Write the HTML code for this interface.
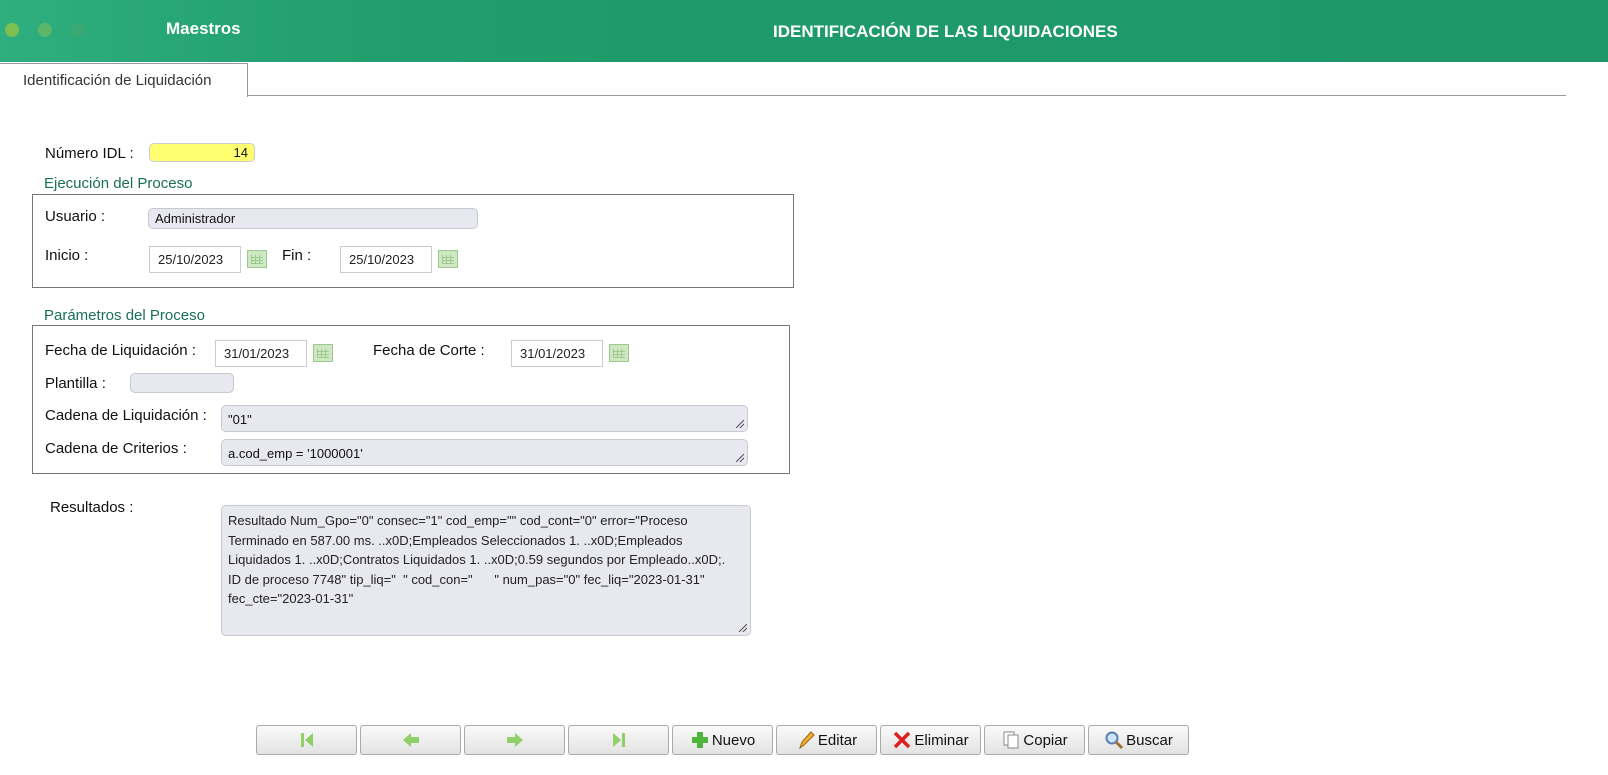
<!DOCTYPE html>
<html><head><meta charset="utf-8"><style>
*{box-sizing:border-box;margin:0;padding:0}
body{width:1608px;height:775px;position:relative;background:#fff;font-family:"Liberation Sans",sans-serif;color:#111;overflow:hidden}
.a{position:absolute}
.hdr{left:0;top:0;width:1608px;height:62px;background:linear-gradient(90deg,#2fae7e 0%,#22a06f 20%,#1f9a6a 40%,#1e9868 100%)}
.dot{width:14px;height:14px;border-radius:50%;top:23px}
.lbl{font-size:15px;color:#111}
.grp{font-size:15px;color:#1a6f57}
.box{border:1px solid #777}
.in{background:#e8e8f0;border:1px solid #c8c8d0;border-radius:5px;font-size:13px;padding:0 6px;line-height:20px}
.dt{background:#fff;border:1px solid #ccc;font-size:13px;width:92px;height:27px;line-height:25px;padding-left:8px;color:#222}
.cal{width:20px;height:18px;background:#cfe8c4;border:1px solid #9cc98c}
.cal:after{content:"";position:absolute;left:3px;top:4px;width:12px;height:9px;background:repeating-linear-gradient(90deg,#9cc98c 0 1px,transparent 1px 4px),repeating-linear-gradient(0deg,#9cc98c 0 1px,transparent 1px 3px)}
.btn{top:725px;height:30px;width:101px;border:1px solid #aaa;border-radius:3px;background:linear-gradient(#fafafa,#e2e2e2);font-size:15px;display:flex;align-items:center;justify-content:center;gap:2px;color:#111}
.rz{position:absolute;right:3px;bottom:3px;width:8px;height:8px;background:linear-gradient(135deg,transparent 45%,#555 45% 55%,transparent 55% 70%,#555 70% 80%,transparent 80%)}
</style></head><body>
<div class="a hdr"></div>
<div class="a dot" style="left:5px;background:#7dc050"></div>
<div class="a dot" style="left:38px;background:#5cb56a"></div>
<div class="a dot" style="left:71px;background:#3aa874"></div>
<div class="a" style="left:166px;top:19px;font-size:17px;font-weight:bold;color:#fff">Maestros</div>
<div class="a" style="left:773px;top:22px;font-size:17px;font-weight:bold;color:#fff">IDENTIFICACIÓN DE LAS LIQUIDACIONES</div>
<div class="a" style="left:0;top:95px;width:1566px;height:1px;background:#999"></div>
<div class="a" style="left:0;top:63px;width:248px;height:34px;background:#fff;border:1px solid #999;border-bottom:none;border-left:none"></div>
<div class="a" style="left:23px;top:72px;font-size:15px;color:#333">Identificación de Liquidación</div>

<div class="a lbl" style="left:45px;top:145px">Número IDL :</div>
<div class="a" style="left:149px;top:143px;width:106px;height:19px;background:#ffff70;border:1px solid #ccc;border-radius:5px;font-size:13px;text-align:right;padding-right:6px;line-height:18px">14</div>

<div class="a grp" style="left:44px;top:175px">Ejecución del Proceso</div>
<div class="a box" style="left:32px;top:194px;width:762px;height:94px"></div>
<div class="a lbl" style="left:45px;top:208px">Usuario :</div>
<div class="a in" style="left:148px;top:208px;width:330px;height:21px">Administrador</div>
<div class="a lbl" style="left:45px;top:247px">Inicio :</div>
<div class="a dt" style="left:149px;top:246px">25/10/2023</div>
<div class="a cal" style="left:247px;top:250px"></div>
<div class="a lbl" style="left:282px;top:247px">Fin :</div>
<div class="a dt" style="left:340px;top:246px">25/10/2023</div>
<div class="a cal" style="left:438px;top:250px"></div>

<div class="a grp" style="left:44px;top:307px">Parámetros del Proceso</div>
<div class="a box" style="left:32px;top:325px;width:758px;height:149px"></div>
<div class="a lbl" style="left:45px;top:342px">Fecha de Liquidación :</div>
<div class="a dt" style="left:215px;top:340px">31/01/2023</div>
<div class="a cal" style="left:313px;top:344px"></div>
<div class="a lbl" style="left:373px;top:342px">Fecha de Corte :</div>
<div class="a dt" style="left:511px;top:340px">31/01/2023</div>
<div class="a cal" style="left:609px;top:344px"></div>
<div class="a lbl" style="left:45px;top:375px">Plantilla :</div>
<div class="a in" style="left:130px;top:373px;width:104px;height:20px"></div>
<div class="a lbl" style="left:45px;top:407px">Cadena de Liquidación :</div>
<div class="a in" style="left:221px;top:405px;width:527px;height:27px;line-height:27px">"01"<span class="rz"></span></div>
<div class="a lbl" style="left:45px;top:440px">Cadena de Criterios :</div>
<div class="a in" style="left:221px;top:439px;width:527px;height:27px;line-height:27px">a.cod_emp = '1000001'<span class="rz"></span></div>

<div class="a lbl" style="left:50px;top:499px">Resultados :</div>
<div class="a in" style="left:221px;top:505px;width:530px;height:131px;padding:5px 6px;line-height:19.5px;color:#222;white-space:nowrap;overflow:hidden">Resultado Num_Gpo="0" consec="1" cod_emp="" cod_cont="0" error="Proceso<br>Terminado en 587.00 ms. ..x0D;Empleados Seleccionados 1. ..x0D;Empleados<br>Liquidados 1. ..x0D;Contratos Liquidados 1. ..x0D;0.59 segundos por Empleado..x0D;.<br>ID de proceso 7748" tip_liq="&nbsp; " cod_con="&nbsp;&nbsp;&nbsp;&nbsp;&nbsp; " num_pas="0" fec_liq="2023-01-31"<br>fec_cte="2023-01-31"<span class="rz"></span></div>

<div class="a btn" style="left:256px"><svg width="20" height="20"><rect x="4" y="3" width="3" height="14" fill="#8fd06a"/><path d="M16 3 L8 10 L16 17Z" fill="#8fd06a"/></svg></div>
<div class="a btn" style="left:360px"><svg width="22" height="20"><path d="M3 10 L11 3 L11 7 L19 7 L19 13 L11 13 L11 17Z" fill="#8fd06a"/></svg></div>
<div class="a btn" style="left:464px"><svg width="22" height="20"><path d="M19 10 L11 3 L11 7 L3 7 L3 13 L11 13 L11 17Z" fill="#8fd06a"/></svg></div>
<div class="a btn" style="left:568px"><svg width="20" height="20"><rect x="13" y="3" width="3" height="14" fill="#8fd06a"/><path d="M4 3 L12 10 L4 17Z" fill="#8fd06a"/></svg></div>
<div class="a btn" style="left:672px"><svg width="20" height="20"><path d="M7 2h6v5h5v6h-5v5h-6v-5h-5v-6h5z" fill="#4cb53a"/></svg>Nuevo</div>
<div class="a btn" style="left:776px"><svg width="20" height="20"><path d="M4 18 L6 12 L15 2 L18 5 L8 15Z" fill="#f0b030" stroke="#a06010" stroke-width="1"/></svg>Editar</div>
<div class="a btn" style="left:880px"><svg width="20" height="20"><path d="M3 3 L17 17 M17 3 L3 17" stroke="#e02020" stroke-width="3.5"/></svg>Eliminar</div>
<div class="a btn" style="left:984px"><svg width="20" height="20"><rect x="3" y="2" width="10" height="13" fill="#fff" stroke="#888"/><rect x="7" y="5" width="10" height="13" fill="#fff" stroke="#888"/></svg>Copiar</div>
<div class="a btn" style="left:1088px"><svg width="20" height="20"><circle cx="8" cy="8" r="5.5" fill="#cfe4f8" stroke="#5a7fb0" stroke-width="2"/><path d="M12 12 L18 18" stroke="#a07030" stroke-width="3"/></svg>Buscar</div>
</body></html>
